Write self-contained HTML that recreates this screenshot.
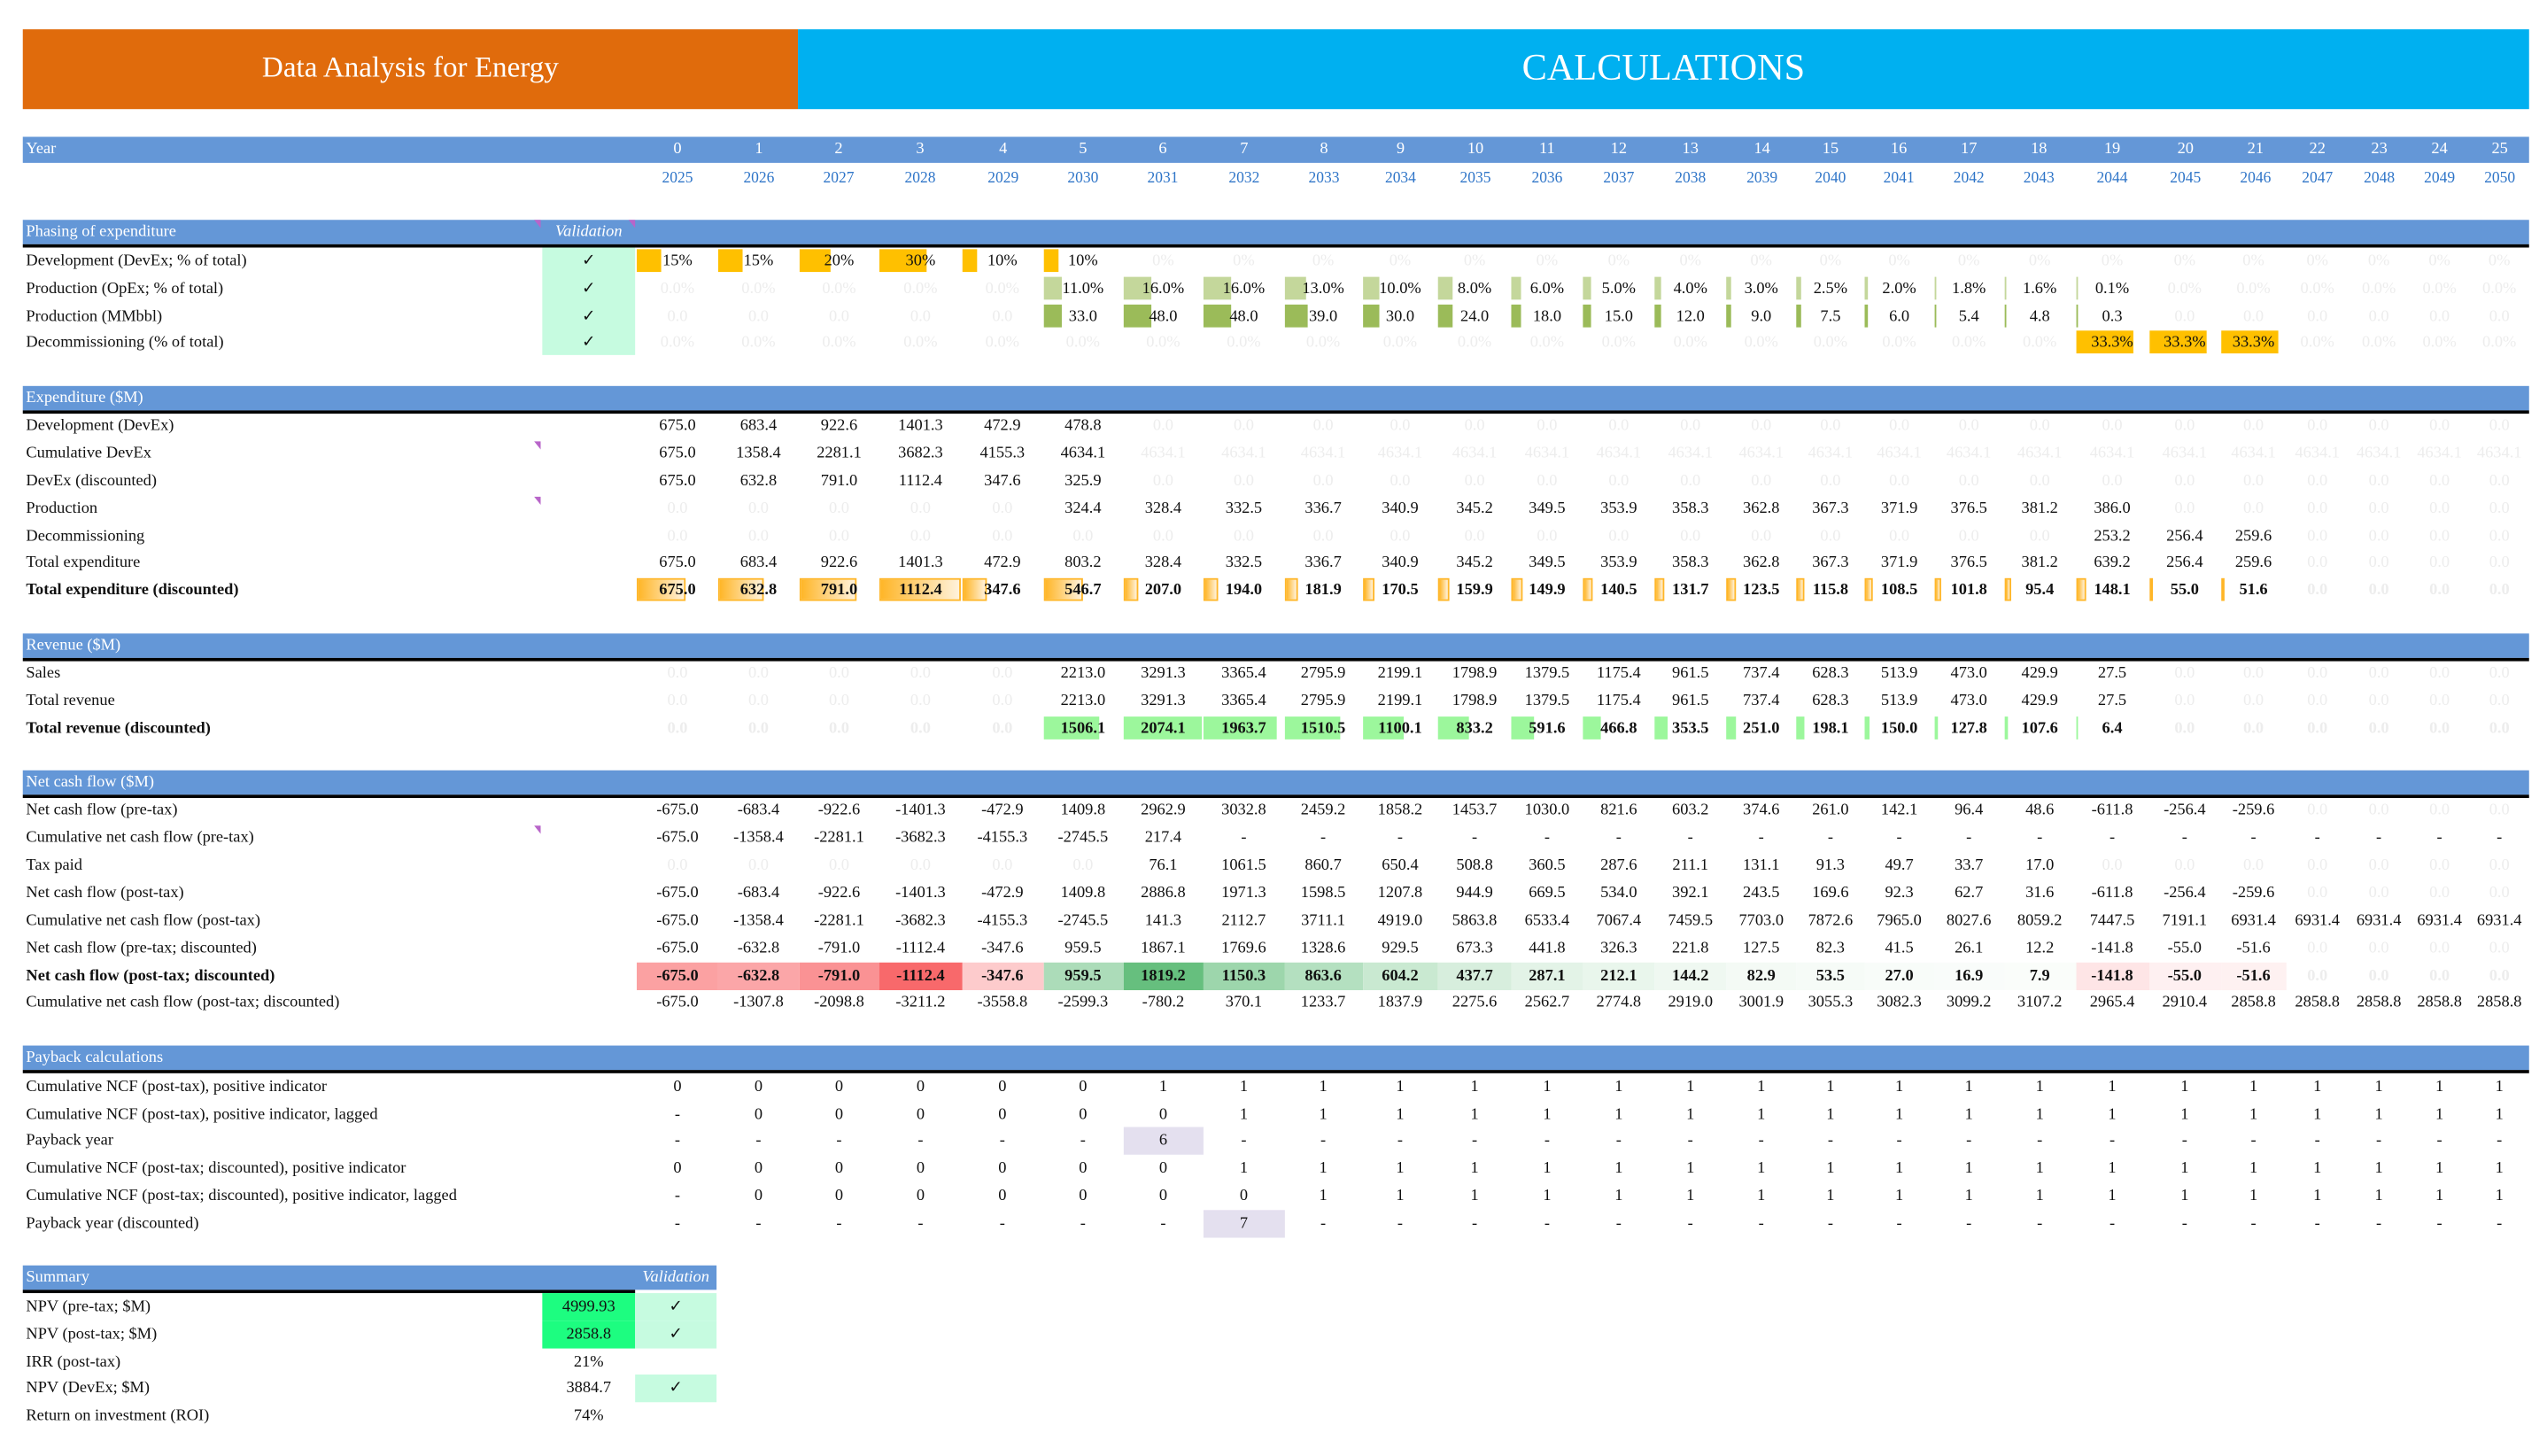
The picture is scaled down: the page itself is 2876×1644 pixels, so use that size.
<!DOCTYPE html>
<html><head><meta charset="utf-8">
<style>
html,body{margin:0;padding:0;background:#fff;width:2876px;height:1644px;overflow:hidden}
#w{position:absolute;left:0;top:0;width:1564px;height:894px;transform:scale(1.83887);transform-origin:0 0;font-family:"Liberation Serif",serif;font-size:10px;color:#111}
.a{position:absolute;white-space:nowrap}
.band{position:absolute;background:#6497d7;color:#fff}
.ln{position:absolute;height:2px;background:#000}
.c{position:absolute;height:17px;line-height:17px;text-align:center}
.f{color:#ededed}
.b{font-weight:600}
.bar{position:absolute;top:1.5px;height:14px}
.t{position:relative}
.mk{position:absolute;width:0;height:0;border-top:5px solid #b865c9;border-left:4px solid transparent}
</style></head><body>
<div id="w">
<div class="a" style="left:14px;top:18px;width:476px;height:49px;background:#e06b0c;color:#fff;font-size:18px;line-height:47px;text-align:center">Data Analysis for Energy</div>
<div class="a" style="left:490px;top:18px;width:1063px;height:49px;background:#00b0f0;color:#fff;font-size:23px;line-height:47px;text-align:center">CALCULATIONS</div>
</div>
<script>
var W=document.getElementById('w');
var C=[416,466,515,565,616,665,714,764,813,860,906,950,994,1038,1082,1124,1166,1209,1252,1297,1342,1385,1423,1461,1498,1535];
var L=[],R=[];
for(var i=0;i<26;i++){L[i]=i==0?391:(C[i-1]+C[i])/2;R[i]=i==25?1553:(C[i]+C[i+1])/2;}
function el(cls,st,txt){var d=document.createElement('div');d.className=cls;d.style.cssText=st;if(txt!=null)d.textContent=txt;W.appendChild(d);return d;}
function band(y,label,h){el('band','left:14px;top:'+y+'px;width:1539px;height:'+(h||15)+'px;line-height:15px;padding-left:2px;box-sizing:border-box',label);}
function line(y,x1,x2){el('ln','left:'+(x1||14)+'px;top:'+y+'px;width:'+((x2||1553)-(x1||14))+'px');}
function label(y,t,b){el('a'+(b?' b':''),'left:16px;top:'+(y-8.5)+'px;height:17px;line-height:17px',t);}
band(84,'Year',16);
for(var i=0;i<26;i++){el('a','left:'+(C[i]-15)+'px;width:30px;text-align:center;top:84px;line-height:16px;color:#fff',String(i));
el('a','left:'+(C[i]-20)+'px;width:40px;text-align:center;top:102px;line-height:16px;color:#2f75c8;font-size:9.5px',String(2025+i));}
function rep(v,n){var a=[];for(var i=0;i<n;i++)a.push(v);return a;}
function row(y,t,vals,opt){opt=opt||{};label(y,t,opt.bold);
 for(var i=0;i<26;i++){var v=vals[i];if(v==null)continue;var s=String(v),fd=false;if(s[0]=='~'){fd=true;s=s.slice(1);}
  var st='left:'+L[i]+'px;top:'+(y-8.5)+'px;width:'+(R[i]-L[i])+'px;';
  var bg=opt.bg?opt.bg(s,i,fd):null;if(bg)st+='background:'+bg+';';
  var d=el('c'+(fd?' f':'')+(opt.bold?' b':''),st);
  if(opt.bar&&!fd){var w=opt.bar(parseFloat(s),i);if(w>0){var b=document.createElement('div');b.className='bar';b.style.cssText='left:0;width:'+w+'px;'+opt.bs;d.appendChild(b);}}
  var sp=document.createElement('span');sp.className='t';sp.textContent=s;d.appendChild(sp);}
}
band(135,'Phasing of expenditure');line(150);
el('a','left:333px;top:135px;width:57px;height:15px;line-height:15px;text-align:center;color:#fff;font-style:italic','Validation');
el('mk','left:328px;top:135px');el('mk','left:386px;top:135px');
el('a','left:333px;top:152px;width:57px;height:66px;background:#c6fbe0');
[160,177,194,210].forEach(function(y){el('a','left:333px;width:57px;text-align:center;top:'+(y-8.5)+'px;line-height:17px','\u2713');});
row(160,'Development (DevEx; % of total)',['15%','15%','20%','30%','10%','10%'].concat(rep('~0%',20)),{bar:function(v){return v*0.98},bs:'background:#ffc000'});
row(177,'Production (OpEx; % of total)',rep('~0.0%',5).concat(['11.0%','16.0%','16.0%','13.0%','10.0%','8.0%','6.0%','5.0%','4.0%','3.0%','2.5%','2.0%','1.8%','1.6%','0.1%']).concat(rep('~0.0%',6)),{bar:function(v){return v*1.07},bs:'background:#c4d79b'});
row(194,'Production (MMbbl)',rep('~0.0',5).concat(['33.0','48.0','48.0','39.0','30.0','24.0','18.0','15.0','12.0','9.0','7.5','6.0','5.4','4.8','0.3']).concat(rep('~0.0',6)),{bar:function(v){return v*0.36},bs:'background:#9bbb59'});
row(210,'Decommissioning (% of total)',rep('~0.0%',19).concat(['33.3%','33.3%','33.3%']).concat(rep('~0.0%',4)),{bar:function(v){return v*1.07},bs:'background:#ffc000'});
band(237,'Expenditure ($M)');line(252);
row(261,'Development (DevEx)',['675.0','683.4','922.6','1401.3','472.9','478.8'].concat(rep('~0.0',20)));
row(278,'Cumulative DevEx',['675.0','1358.4','2281.1','3682.3','4155.3','4634.1'].concat(rep('~4634.1',20)));
row(295,'DevEx (discounted)',['675.0','632.8','791.0','1112.4','347.6','325.9'].concat(rep('~0.0',20)));
row(312,'Production',rep('~0.0',5).concat(['324.4','328.4','332.5','336.7','340.9','345.2','349.5','353.9','358.3','362.8','367.3','371.9','376.5','381.2','386.0']).concat(rep('~0.0',6)));
row(329,'Decommissioning',rep('~0.0',19).concat(['253.2','256.4','259.6']).concat(rep('~0.0',4)));
row(345,'Total expenditure',['675.0','683.4','922.6','1401.3','472.9','803.2','328.4','332.5','336.7','340.9','345.2','349.5','353.9','358.3','362.8','367.3','371.9','376.5','381.2','639.2','256.4','259.6'].concat(rep('~0.0',4)));
row(362,'Total expenditure (discounted)',['675.0','632.8','791.0','1112.4','347.6','546.7','207.0','194.0','181.9','170.5','159.9','149.9','140.5','131.7','123.5','115.8','108.5','101.8','95.4','148.1','55.0','51.6'].concat(rep('~0.0',4)),{bold:1,bar:function(v){return v/1112.4*50},bs:'background:linear-gradient(90deg,#ffb628,#fff2dc);border:1px solid #ffb628;box-sizing:border-box'});
el('mk','left:328px;top:271px');el('mk','left:328px;top:305px');
band(389,'Revenue ($M)');line(404);
var sales=['2213.0','3291.3','3365.4','2795.9','2199.1','1798.9','1379.5','1175.4','961.5','737.4','628.3','513.9','473.0','429.9','27.5'];
row(413,'Sales',rep('~0.0',5).concat(sales).concat(rep('~0.0',6)));
row(430,'Total revenue',rep('~0.0',5).concat(sales).concat(rep('~0.0',6)));
row(447,'Total revenue (discounted)',rep('~0.0',5).concat(['1506.1','2074.1','1963.7','1510.5','1100.1','833.2','591.6','466.8','353.5','251.0','198.1','150.0','127.8','107.6','6.4']).concat(rep('~0.0',6)),{bold:1,bar:function(v){return v/2074.1*48},bs:'background:#9cf79c'});
band(473,'Net cash flow ($M)');line(488);
row(497,'Net cash flow (pre-tax)',['-675.0','-683.4','-922.6','-1401.3','-472.9','1409.8','2962.9','3032.8','2459.2','1858.2','1453.7','1030.0','821.6','603.2','374.6','261.0','142.1','96.4','48.6','-611.8','-256.4','-259.6'].concat(rep('~0.0',4)));
row(514,'Cumulative net cash flow (pre-tax)',['-675.0','-1358.4','-2281.1','-3682.3','-4155.3','-2745.5','217.4'].concat(rep('-',19)));
el('mk','left:328px;top:507px');
row(531,'Tax paid',rep('~0.0',6).concat(['76.1','1061.5','860.7','650.4','508.8','360.5','287.6','211.1','131.1','91.3','49.7','33.7','17.0']).concat(rep('~0.0',7)));
row(548,'Net cash flow (post-tax)',['-675.0','-683.4','-922.6','-1401.3','-472.9','1409.8','2886.8','1971.3','1598.5','1207.8','944.9','669.5','534.0','392.1','243.5','169.6','92.3','62.7','31.6','-611.8','-256.4','-259.6'].concat(rep('~0.0',4)));
row(565,'Cumulative net cash flow (post-tax)',['-675.0','-1358.4','-2281.1','-3682.3','-4155.3','-2745.5','141.3','2112.7','3711.1','4919.0','5863.8','6533.4','7067.4','7459.5','7703.0','7872.6','7965.0','8027.6','8059.2','7447.5','7191.1','6931.4','6931.4','6931.4','6931.4','6931.4']);
row(582,'Net cash flow (pre-tax; discounted)',['-675.0','-632.8','-791.0','-1112.4','-347.6','959.5','1867.1','1769.6','1328.6','929.5','673.3','441.8','326.3','221.8','127.5','82.3','41.5','26.1','12.2','-141.8','-55.0','-51.6'].concat(rep('~0.0',4)));
function mix(c,t){var r=Math.round(255+(c[0]-255)*t),g=Math.round(255+(c[1]-255)*t),b=Math.round(255+(c[2]-255)*t);return 'rgb('+r+','+g+','+b+')';}
row(599,'Net cash flow (post-tax; discounted)',['-675.0','-632.8','-791.0','-1112.4','-347.6','959.5','1819.2','1150.3','863.6','604.2','437.7','287.1','212.1','144.2','82.9','53.5','27.0','16.9','7.9','-141.8','-55.0','-51.6'].concat(rep('~0.0',4)),{bold:1,bg:function(s,i,fd){if(fd)return null;var v=parseFloat(s);return v<0?mix([248,105,107],Math.min(1,-v/1112.4)*0.95+0.05):mix([99,190,123],Math.min(1,v/1819.2)*0.95+0.03);}});
row(615,'Cumulative net cash flow (post-tax; discounted)',['-675.0','-1307.8','-2098.8','-3211.2','-3558.8','-2599.3','-780.2','370.1','1233.7','1837.9','2275.6','2562.7','2774.8','2919.0','3001.9','3055.3','3082.3','3099.2','3107.2','2965.4','2910.4','2858.8','2858.8','2858.8','2858.8','2858.8']);
band(642,'Payback calculations');line(657);
row(667,'Cumulative NCF (post-tax), positive indicator',rep('0',6).concat(rep('1',20)));
row(684,'Cumulative NCF (post-tax), positive indicator, lagged',['-'].concat(rep('0',6)).concat(rep('1',19)));
var pb=rep('-',26);pb[6]='6';
row(700,'Payback year',pb,{bg:function(s,i){return i==6?'#e4e0ef':null}});
row(717,'Cumulative NCF (post-tax; discounted), positive indicator',rep('0',7).concat(rep('1',19)));
row(734,'Cumulative NCF (post-tax; discounted), positive indicator, lagged',['-'].concat(rep('0',7)).concat(rep('1',18)));
var pb2=rep('-',26);pb2[7]='7';
row(751,'Payback year (discounted)',pb2,{bg:function(s,i){return i==7?'#e4e0ef':null}});
el('band','left:14px;top:777px;width:426px;height:15px;line-height:15px;padding-left:2px;box-sizing:border-box','Summary');
el('a','left:390px;top:777px;width:50px;height:15px;line-height:15px;text-align:center;color:#fff;font-style:italic','Validation');
line(792,14,390);
var S=[[802,'NPV (pre-tax; $M)','4999.93',1,1],[819,'NPV (post-tax; $M)','2858.8',1,1],[836,'IRR (post-tax)','21%',0,0],[852,'NPV (DevEx; $M)','3884.7',0,1],[869,'Return on investment (ROI)','74%',0,0]];
S.forEach(function(r){label(r[0],r[1]);el('c','left:333px;width:57px;top:'+(r[0]-8.5)+'px;'+(r[3]?'background:#1dfd80;':''),r[2]);
 if(r[4])el('c','left:390px;width:50px;top:'+(r[0]-8.5)+'px;background:#c6fbe0','\u2713');});
</script>
</body></html>
